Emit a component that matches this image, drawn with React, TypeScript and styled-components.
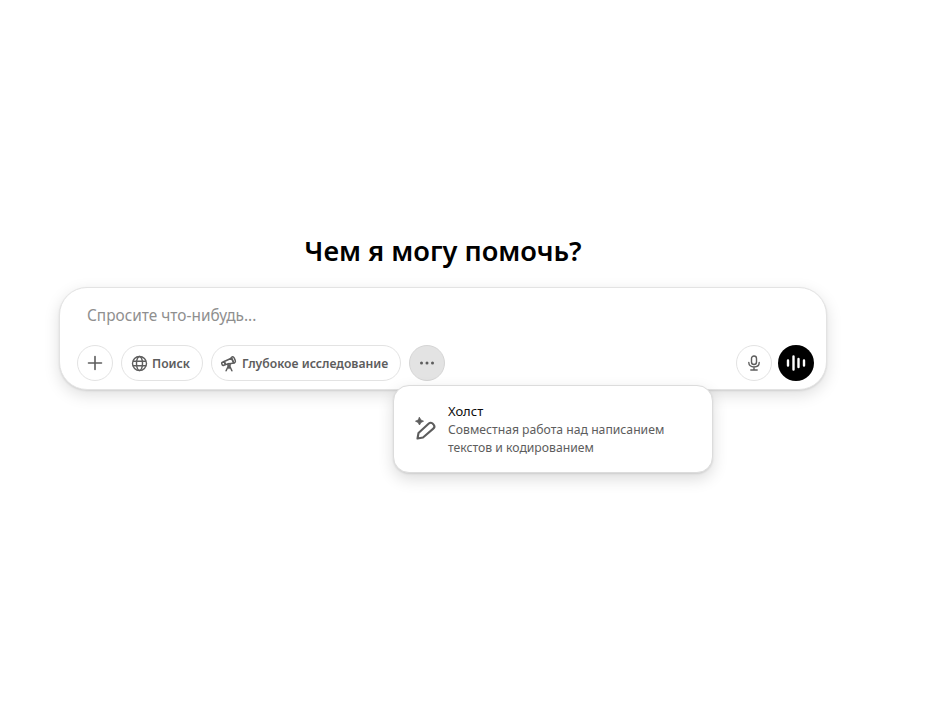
import React from "react";
import styled, { createGlobalStyle } from "styled-components";

const GlobalStyle = createGlobalStyle`
  html, body {
    margin: 0;
    padding: 0;
    background: #fff;
    font-family: "Noto Sans", "Open Sans", sans-serif;
  }
`;

export default function App() {
  return (
    <>
      <GlobalStyle />
      <Page>
        <Title>Чем я могу помочь?</Title>
        <Composer>
          <Placeholder>Спросите что-нибудь...</Placeholder>
          <Toolbar>
            <RoundButton aria-label="add">
              <svg width="18" height="18" viewBox="0 0 18 18" fill="none" stroke="#5d5d5d" strokeWidth="1.6" strokeLinecap="round">
                <path d="M9 2.5v13M2.5 9h13" />
              </svg>
            </RoundButton>
            <Pill>
              <svg width="17" height="17" viewBox="0 0 17 17" fill="none" stroke="#5d5d5d" strokeWidth="1.4">
                <circle cx="8.5" cy="8.5" r="7" />
                <ellipse cx="8.5" cy="8.5" rx="3" ry="7" />
                <path d="M1.8 6.2h13.4M1.8 10.8h13.4" />
              </svg>
              Поиск
            </Pill>
            <Pill>
              <svg width="17" height="17" viewBox="0 0 17 17" fill="none" stroke="#5d5d5d" strokeWidth="1.5" strokeLinecap="round" strokeLinejoin="round">
                <path d="M1 7.500 3.200 6.500l1.300 3-2.200 1c-.4.200-.7 0-.9-.3L.7 8.500c-.2-.4 0-.8.300-1Z" />
                <path d="M3.200 6.500 10.800 3l2 5-8.300 1.500Z" />
                <path d="M11 2c.8-.4 1.700 0 2.200 1l1 2.400c.4 1 .2 2-.6 2.400-.5.200-1 0-1.200-.6L10.400 3.500c-.3-.7 0-1.300.6-1.500Z" />
                <circle cx="8" cy="9.800" r="1.200" />
                <path d="m7.300 11-2.200 4.800M8.700 11l2.200 4.800M8 11.200v2.300" />
              </svg>
              Глубокое исследование
            </Pill>
            <RoundButton $active aria-label="more">
              <svg width="16" height="4" viewBox="0 0 16 4" fill="#5d5d5d">
                <circle cx="2.500" cy="2" r="1.500" />
                <circle cx="8" cy="2" r="1.500" />
                <circle cx="13.500" cy="2" r="1.500" />
              </svg>
            </RoundButton>
            <Spacer />
            <RoundButton aria-label="microphone">
              <svg width="16" height="16" viewBox="0 0 16 16" fill="none" stroke="#5d5d5d" strokeWidth="1.4" strokeLinecap="round">
                <rect x="5.500" y="1" width="5" height="8.500" rx="2.500" />
                <path d="M2.800 7.500c0 2.800 2.300 4.500 5.200 4.500s5.200-1.700 5.200-4.500M8 12v3M4.800 15h6.400" />
              </svg>
            </RoundButton>
            <VoiceButton aria-label="voice">
              <svg width="20" height="20" viewBox="0 0 20 20" fill="none" stroke="#fff" strokeWidth="2.400" strokeLinecap="round">
                <path d="M2 7.500v5M7.500 3.500v13M12.500 6v8M18 7.500v5" />
              </svg>
            </VoiceButton>
          </Toolbar>
          <Popover>
            <PopoverIcon>
              <svg width="24" height="24" viewBox="0 0 24 24" fill="none" stroke="#5d5d5d" strokeWidth="2.100" strokeLinecap="round" strokeLinejoin="round">
                <path d="M4.500 21.500 5.500 16 15.800 6.500c1.200-1.100 3-1 4 .2l.8.9c1 1.200.9 3-.3 4L10 20.500Z" />
                <path d="M6.500.500 7.900 3 10.500 4.200 7.900 5.400 6.500 8 5.100 5.400 2.500 4.200 5.100 3Z" fill="#5d5d5d" strokeWidth="0.800" />
              </svg>
            </PopoverIcon>
            <PopoverText>
              <PopoverTitle>Холст</PopoverTitle>
              <PopoverDescription>
                Совместная работа над написанием
                <br />
                текстов и кодированием
              </PopoverDescription>
            </PopoverText>
          </Popover>
        </Composer>
      </Page>
    </>
  );
}

const Page = styled.div`
  width: 928px;
  height: 705px;
  box-sizing: border-box;
  padding: 232px 0 0 59px;
  overflow: hidden;
`;

const Title = styled.h1`
  width: 768px;
  margin: 0 0 17px;
  font-size: 27.2px;
  line-height: 38px;
  font-weight: 600;
  color: #000;
  text-align: center;
`;

const Composer = styled.div`
  position: relative;
  width: 768px;
  height: 103px;
  box-sizing: border-box;
  padding: 16px 12px 0 17px;
  border: 1px solid #e3e3e3;
  border-radius: 28px;
  background: #fff;
  box-shadow: 0 5px 16px rgba(0, 0, 0, 0.13), 0 1px 2px rgba(0, 0, 0, 0.1);
`;

const Placeholder = styled.div`
  padding-left: 10px;
  font-size: 15.4px;
  line-height: 24px;
  color: #8f8f8f;
`;

const Toolbar = styled.div`
  display: flex;
  align-items: center;
  gap: 8px;
  margin-top: 17px;
`;

const Spacer = styled.div`
  flex: 1;
`;

const RoundButton = styled.button<{ $active?: boolean }>`
  display: flex;
  align-items: center;
  justify-content: center;
  width: 36px;
  height: 36px;
  padding: 0;
  border: 1px solid ${(p) => (p.$active ? "#d5d5d5" : "#e3e3e3")};
  border-radius: 50%;
  background: ${(p) => (p.$active ? "#e3e3e3" : "#fff")};
`;

const Pill = styled.button`
  display: flex;
  align-items: center;
  gap: 4px;
  height: 36px;
  padding: 0 12px 0 9px;
  border: 1px solid #e3e3e3;
  border-radius: 18px;
  background: #fff;
  font-family: inherit;
  font-size: 12.2px;
  font-weight: 600;
  color: #5d5d5d;
  white-space: nowrap;
`;

const VoiceButton = styled.button`
  display: flex;
  align-items: center;
  justify-content: center;
  width: 36px;
  height: 36px;
  margin-left: -2px;
  padding: 0;
  border: none;
  border-radius: 50%;
  background: #000;
`;

const Popover = styled.div`
  position: absolute;
  left: 333px;
  top: 97px;
  display: flex;
  align-items: center;
  gap: 11px;
  width: 320px;
  height: 88px;
  box-sizing: border-box;
  padding: 0 12px 0 19px;
  border: 1px solid #dcdcdc;
  border-radius: 16px;
  background: #fff;
  box-shadow: 0 6px 16px rgba(0, 0, 0, 0.14), 0 1px 2px rgba(0, 0, 0, 0.1);
`;

const PopoverIcon = styled.div`
  display: flex;
  flex-shrink: 0;
`;

const PopoverText = styled.div`
  display: flex;
  flex-direction: column;
  padding-top: 2px;
`;

const PopoverTitle = styled.div`
  font-size: 13px;
  line-height: 18px;
  color: #0d0d0d;
  transform: translateY(-1px);
`;

const PopoverDescription = styled.div`
  font-size: 12.2px;
  line-height: 18px;
  color: #5d5d5d;
`;
